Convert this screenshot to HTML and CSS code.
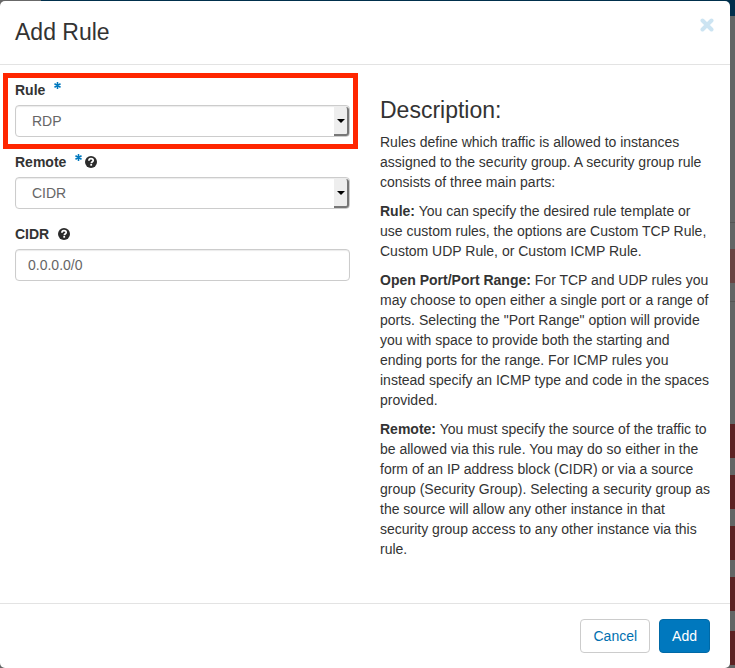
FILE: index.html
```html
<!DOCTYPE html>
<html lang="en">
<head>
<meta charset="utf-8">
<meta name="viewport" content="width=device-width, initial-scale=1">
<title>Add Rule</title>
<link rel="stylesheet" href="styles.css">
</head>
<body>
<svg class="sprite" aria-hidden="true">
  <symbol id="help" viewBox="0 0 12 12">
    <circle cx="6" cy="6" r="6" fill="#2b2b2b"/>
    <path d="M3.900 4.700C3.900 3.300 4.800 2.600 6 2.600s2.200.7 2.200 1.800C8.200 5.800 6.400 5.700 6.300 7.300" fill="none" stroke="#fff" stroke-width="1.700"/>
    <rect x="5.300" y="8" width="1.800" height="1.700" fill="#fff"/>
  </symbol>
  <symbol id="required" viewBox="0 0 6 6">
    <path d="M3 0v6M.4 1.500l5.200 3M5.600 1.500l-5.200 3" fill="none" stroke="#0078be" stroke-width="1.300"/>
  </symbol>
</svg>
<main class="modal" role="dialog" aria-labelledby="title">
  <header class="modal-header">
    <h1 id="title">Add Rule</h1>
    <button class="close" type="button" aria-label="Close">
      <svg viewBox="0 0 14 14"><path d="M2.500 2.500l9 9M11.500 2.500l-9 9" fill="none" stroke="#cce4f2" stroke-width="4" stroke-linecap="round"/></svg>
    </button>
  </header>
  <div class="modal-body">
    <form id="rule-form" class="form">
      <div class="field highlighted">
        <div class="label-row">
          <label for="rule">Rule</label>
          <svg class="required"><use href="#required"/></svg>
        </div>
        <div class="select">
          <select id="rule"><option>RDP</option></select>
          <span class="arrow"></span>
        </div>
      </div>
      <div class="field">
        <div class="label-row">
          <label for="remote">Remote</label>
          <svg class="required"><use href="#required"/></svg>
          <svg class="help"><use href="#help"/></svg>
        </div>
        <div class="select">
          <select id="remote"><option>CIDR</option></select>
          <span class="arrow"></span>
        </div>
      </div>
      <div class="field">
        <div class="label-row">
          <label for="cidr">CIDR</label>
          <svg class="help spaced"><use href="#help"/></svg>
        </div>
        <input id="cidr" type="text" value="0.0.0.0/0">
      </div>
    </form>
    <section class="description">
      <h2>Description:</h2>
      <p>Rules define which traffic is allowed to instances assigned to the security group. A security group rule consists of three main parts:</p>
      <p><strong>Rule:</strong> You can specify the desired rule template or use custom rules, the options are Custom TCP Rule, Custom UDP Rule, or Custom ICMP Rule.</p>
      <p><strong>Open Port/Port Range:</strong> For TCP and UDP rules you may choose to open either a single port or a range of ports. Selecting the "Port Range" option will provide you with space to provide both the starting and ending ports for the range. For ICMP rules you instead specify an ICMP type and code in the spaces provided.</p>
      <p><strong>Remote:</strong> You must specify the source of the traffic to be allowed via this rule. You may do so either in the form of an IP address block (CIDR) or via a source group (Security Group). Selecting a security group as the source will allow any other instance in that security group access to any other instance via this rule.</p>
    </section>
  </div>
  <footer class="modal-footer">
    <button class="btn" type="button">Cancel</button>
    <button class="btn primary" type="submit" form="rule-form">Add</button>
  </footer>
</main>
<div class="backdrop" aria-hidden="true">
  <div class="toolbar"></div>
  <div class="danger muted"></div>
  <div class="list">
    <div class="danger"></div>
    <div class="danger"></div>
    <div class="danger"></div>
    <div class="danger"></div>
    <div class="danger last"></div>
  </div>
</div>
</body>
</html>
```
FILE: styles.css
```css
* {
  box-sizing: border-box;
}

body {
  display: flex;
  min-height: 100vh;
  margin: 0;
  background:
    linear-gradient(90deg, #686868 41px, #002f4c 41px) 0 0 / 100% 16px no-repeat,
    #636565;
  color: #333;
  font: 14px/20px "Liberation Sans", Arial, sans-serif;
}

h1,
h2,
p {
  margin: 0;
}

.sprite {
  position: absolute;
  width: 0;
  height: 0;
}

.modal {
  display: flex;
  flex: 1;
  flex-direction: column;
  min-width: 0;
  margin-top: 1px;
  border-radius: 5px;
  background: #fff;
}

.modal-header {
  display: flex;
  align-items: flex-start;
  justify-content: space-between;
  padding: 17px 16px 18px 15px;
  border-bottom: 1px solid #e3e3e3;
}

h1,
h2 {
  font-size: 23px;
  font-weight: 400;
  line-height: 28px;
}

.close {
  width: 14px;
  height: 14px;
  padding: 0;
  border: 0;
  background: none;
}

.close svg {
  display: block;
  width: 14px;
  height: 14px;
}

.modal-body {
  display: grid;
  flex: 1;
  grid-template-columns: 1fr 1fr;
  gap: 30px;
  padding: 15px;
}

.form {
  display: flex;
  flex-direction: column;
  gap: 15px;
}

.field {
  display: flex;
  flex-direction: column;
  gap: 5px;
}

.highlighted {
  position: relative;
}

.highlighted::after {
  position: absolute;
  inset: -7px -8px -12px -12px;
  border: 5px solid #ff2600;
  content: "";
  pointer-events: none;
}

.label-row {
  display: flex;
  align-items: center;
  height: 20px;
}

label {
  font-weight: 700;
}

.required {
  align-self: flex-start;
  width: 7px;
  height: 7px;
  margin: 2px 3px 0 9px;
}

.help {
  width: 12px;
  height: 12px;
}

.spaced {
  margin-left: 9px;
}

.select {
  position: relative;
}

select,
input {
  display: block;
  width: 100%;
  height: 32px;
  margin: 0;
  border: 1px solid #ccc;
  border-radius: 4px;
  background: #fff;
  box-shadow: inset 0 1px 1px rgba(0, 0, 0, 0.08);
  color: #666;
  font: inherit;
}

select {
  padding: 0 16px;
  appearance: none;
}

input {
  padding: 0 12px;
}

.arrow {
  position: absolute;
  inset: 2px 1px 1px auto;
  display: grid;
  width: 15px;
  place-items: center;
  border: solid #777;
  border-width: 0 2px 2px 0;
  border-radius: 0 3px 3px 0;
  background: #eee;
  pointer-events: none;
}

.arrow::before {
  border: solid transparent;
  border-width: 4px 4px 0;
  border-top-color: #000;
  content: "";
}

.description {
  display: flex;
  flex-direction: column;
  gap: 9px;
  padding: 17px 0 20px;
}

.description h2 {
  line-height: 26px;
}

.modal-footer {
  display: flex;
  justify-content: flex-end;
  gap: 9px;
  padding: 15px 20px;
  border-top: 1px solid #e3e3e3;
}

.btn {
  height: 34px;
  padding: 0 12px;
  border: 1px solid #ccc;
  border-radius: 4px;
  background: #fff;
  color: #0070b0;
  font: inherit;
}

.primary {
  border-color: #0069a6;
  background: #0078be;
  color: #fff;
}

.backdrop {
  width: 5px;
}

.toolbar {
  height: 223px;
  margin-bottom: 26px;
  border-bottom: 1px solid #555;
}

.danger {
  height: 34px;
  background: #5c2223;
}

.muted {
  background: #694342;
}

.last {
  margin-top: 3px;
}

.list {
  display: grid;
  gap: 17px;
  margin-top: 18px;
  padding-top: 122px;
  border-top: 1px solid #555;
}
```
